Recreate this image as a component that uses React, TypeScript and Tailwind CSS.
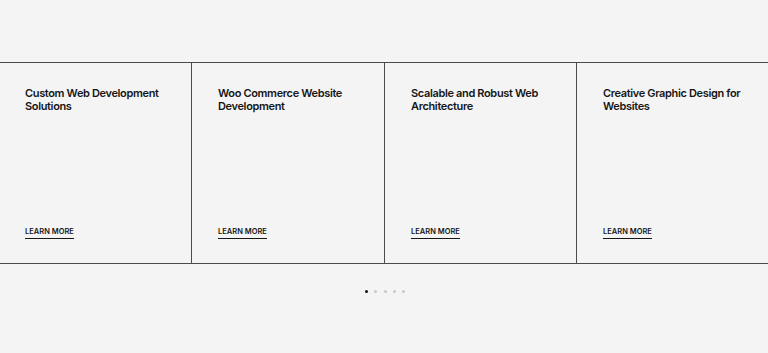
export default function App() {
  const cards = [
    ["Custom Web Development", "Solutions"],
    ["Woo Commerce Website", "Development"],
    ["Scalable and Robust Web", "Architecture"],
    ["Creative Graphic Design for", "Websites"],
  ];
  return (
    <div className="w-[768px] h-[353px] bg-[#f4f4f4] overflow-hidden" style={{ fontFamily: "Inter, 'Noto Sans', sans-serif" }}>
      <div className="h-[62px]" />
      <div className="grid grid-cols-[191px_193px_192px_1fr] border-y border-[#4a4a4a] h-[202px]">
        {cards.map((c, i) => (
          <div key={i} className={`flex flex-col justify-between pt-[24px] pb-[23px] ${i > 0 ? "border-l border-[#4a4a4a] pl-[26px]" : "pl-[25px]"}`}>
            <div className="text-[11px] leading-[13px] font-semibold text-[#161616] tracking-[-0.35px]">
              <div>{c[0]}</div>
              <div>{c[1]}</div>
            </div>
            <div>
              <span className="inline-block text-[7.5px] font-semibold text-[#161616] border-b border-[#161616] pb-[2px] leading-[9px]">LEARN MORE</span>
            </div>
          </div>
        ))}
      </div>
      <div className="flex justify-center gap-[6.25px] mt-[26px] pl-[2px]">
        <span className="w-[3px] h-[3px] rounded-full bg-[#111]" />
        <span className="w-[3px] h-[3px] rounded-full bg-[#c8c8c8]" />
        <span className="w-[3px] h-[3px] rounded-full bg-[#c8c8c8]" />
        <span className="w-[3px] h-[3px] rounded-full bg-[#c8c8c8]" />
        <span className="w-[3px] h-[3px] rounded-full bg-[#c8c8c8]" />
      </div>
    </div>
  );
}
